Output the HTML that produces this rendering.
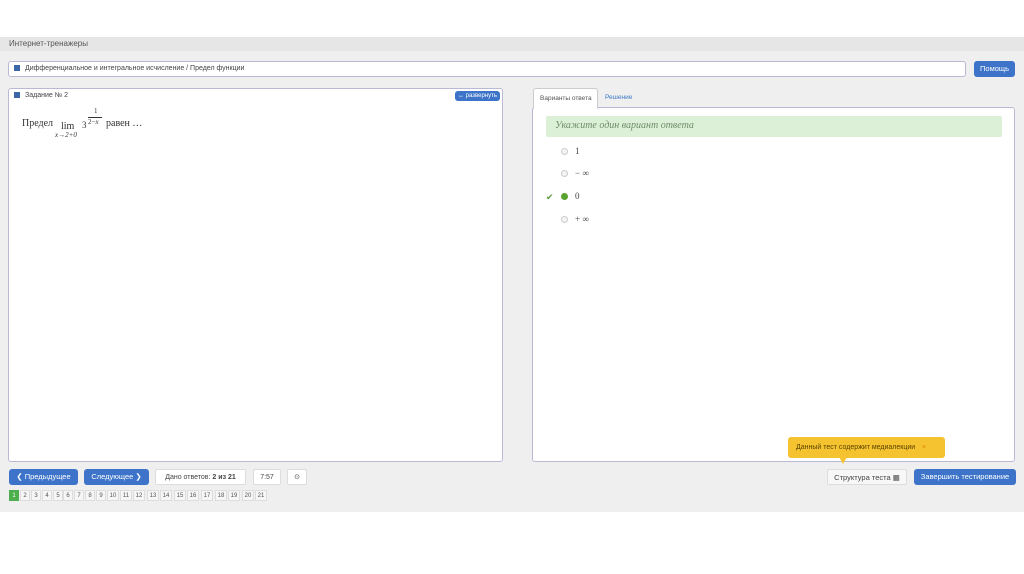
<!DOCTYPE html><html><head><meta charset="utf-8"><style>
*{box-sizing:border-box;margin:0;padding:0}
body{width:1024px;height:574px;background:#fff;font-family:"Liberation Sans",sans-serif;position:relative;overflow:hidden;color:#333}
.a{position:absolute}
.band{left:0;top:37px;width:1024px;height:475px;background:#efefef}
.hdr{left:0;top:37px;width:1024px;height:14px;background:#e6e6e6;font-size:8px;color:#555;padding:2px 0 0 9px}
.box{background:#fff;border:1px solid #b9b9d6;border-radius:3px}
.btn{background:#3d74c9;color:#fff;border-radius:3px;font-size:7.5px;text-align:center}
.wbtn{background:#fff;border:1px solid #ddd;border-radius:2px;font-size:7px;text-align:center;color:#444}
.sq{display:inline-block;width:6px;height:6px;background:#3c66a8;vertical-align:middle;margin-right:5px}
.rad{width:7px;height:7px;border-radius:50%;border:1px solid #ccc;background:#f4f4f4}
.opt{font-family:"Liberation Serif",serif;font-size:9px;color:#444}
.pg{top:490px;width:10px;height:11px;background:#f6f6f6;border:1px solid #ddd;font-size:6px;text-align:center;line-height:10px;color:#555}
</style></head><body>
<div class="a band"></div>
<div class="a hdr">Интернет-тренажеры</div>
<div class="a box" style="left:8px;top:61px;width:958px;height:16px;font-size:7px;padding:3px 0 0 5px;color:#444"><span class="sq"></span>Дифференциальное и интегральное исчисление / Предел функции</div>
<div class="a btn" style="left:974px;top:61px;width:41px;height:16px;line-height:16px">Помощь</div>
<div class="a box" style="left:8px;top:88px;width:495px;height:374px;font-size:7px;padding:3px 0 0 5px;color:#444"><span class="sq"></span>Задание № 2</div>
<div class="a btn" style="left:455px;top:91px;width:45px;height:10px;line-height:10px;font-size:6px">↔ развернуть</div>
<div class="a" style="left:22px;top:118px;font-family:'Liberation Serif',serif;font-size:10px;color:#333">Предел</div>
<div class="a" style="left:61px;top:121px;font-family:'Liberation Serif',serif;font-size:10px">lim</div>
<div class="a" style="left:55px;top:131px;font-family:'Liberation Serif',serif;font-size:7px;font-style:italic">x→2+0</div>
<div class="a" style="left:82px;top:120px;font-family:'Liberation Serif',serif;font-size:9px">3</div>
<div class="a" style="left:94px;top:107px;font-family:'Liberation Serif',serif;font-size:7px">1</div>
<div class="a" style="left:88px;top:117px;width:14px;border-top:1px solid #333"></div>
<div class="a" style="left:88px;top:118px;font-family:'Liberation Serif',serif;font-size:7px">2−<i>x</i></div>
<div class="a" style="left:106px;top:118px;font-family:'Liberation Serif',serif;font-size:10px">равен …</div>
<div class="a box" style="left:532px;top:107px;width:483px;height:355px"></div>
<div class="a" style="left:533px;top:88px;width:65px;height:21px;background:#fff;border:1px solid #ccc;border-bottom:none;border-radius:3px 3px 0 0;font-size:6.5px;color:#555;padding:6px 0 0 6px">Варианты ответа</div>
<div class="a" style="left:605px;top:94px;font-size:6.5px;color:#3b7ac8">Решение</div>
<div class="a" style="left:546px;top:116px;width:456px;height:21px;background:#dcefd7;border-radius:2px;font-family:'Liberation Serif',serif;font-style:italic;font-size:10px;color:#6f8d69;padding:4px 0 0 9px">Укажите один вариант ответа</div>
<div class="a rad" style="left:561px;top:148px"></div><div class="a opt" style="left:575px;top:146px">1</div>
<div class="a rad" style="left:561px;top:170px"></div><div class="a opt" style="left:575px;top:168px">− ∞</div>
<div class="a" style="left:546px;top:192px;font-size:9px;color:#5a9a3a">✔</div>
<div class="a rad" style="left:561px;top:193px;background:#5aa332;border-color:#5aa332"></div><div class="a opt" style="left:575px;top:191px">0</div>
<div class="a rad" style="left:561px;top:216px"></div><div class="a opt" style="left:575px;top:214px">+ ∞</div>
<div class="a btn" style="left:9px;top:469px;width:69px;height:16px;line-height:16px">❮ Предыдущее</div>
<div class="a btn" style="left:84px;top:469px;width:65px;height:16px;line-height:16px">Следующее ❯</div>
<div class="a wbtn" style="left:155px;top:469px;width:91px;height:16px;line-height:15px">Дано ответов: <b>2 из 21</b></div>
<div class="a wbtn" style="left:253px;top:469px;width:28px;height:16px;line-height:15px">7:57</div>
<div class="a wbtn" style="left:287px;top:469px;width:20px;height:16px;line-height:15px">⊙</div>
<div class="a pg" style="left:9px;background:#4cae4c;color:#fff;border-color:#4cae4c">1</div>
<div class="a pg" style="left:20px">2</div><div class="a pg" style="left:31px">3</div><div class="a pg" style="left:42px">4</div><div class="a pg" style="left:53px">5</div><div class="a pg" style="left:63px">6</div><div class="a pg" style="left:74px">7</div><div class="a pg" style="left:85px">8</div><div class="a pg" style="left:96px">9</div>
<div class="a pg" style="left:107px;width:12px">10</div><div class="a pg" style="left:120px;width:12px">11</div><div class="a pg" style="left:133px;width:12px">12</div><div class="a pg" style="left:147px;width:12px">13</div><div class="a pg" style="left:160px;width:12px">14</div><div class="a pg" style="left:174px;width:12px">15</div><div class="a pg" style="left:187px;width:12px">16</div><div class="a pg" style="left:201px;width:12px">17</div><div class="a pg" style="left:215px;width:12px">18</div><div class="a pg" style="left:228px;width:12px">19</div><div class="a pg" style="left:242px;width:12px">20</div><div class="a pg" style="left:255px;width:12px">21</div>
<div class="a" style="left:788px;top:437px;width:157px;height:21px;background:#f5c230;border-radius:3px;font-size:7px;color:#5a4500;line-height:21px;padding-left:8px">Данный тест содержит медиалекции <span style="color:#e08a00;margin-left:5px">×</span></div>
<div class="a" style="left:839px;top:457px;width:0;height:0;border-left:4px solid transparent;border-right:4px solid transparent;border-top:7px solid #f5c230"></div>
<div class="a wbtn" style="left:827px;top:469px;width:80px;height:16px;line-height:15px;font-size:7.5px;background:#f7f7f7">Структура теста ▦</div>
<div class="a btn" style="left:914px;top:469px;width:102px;height:16px;line-height:16px">Завершить тестирование</div>
</body></html>
